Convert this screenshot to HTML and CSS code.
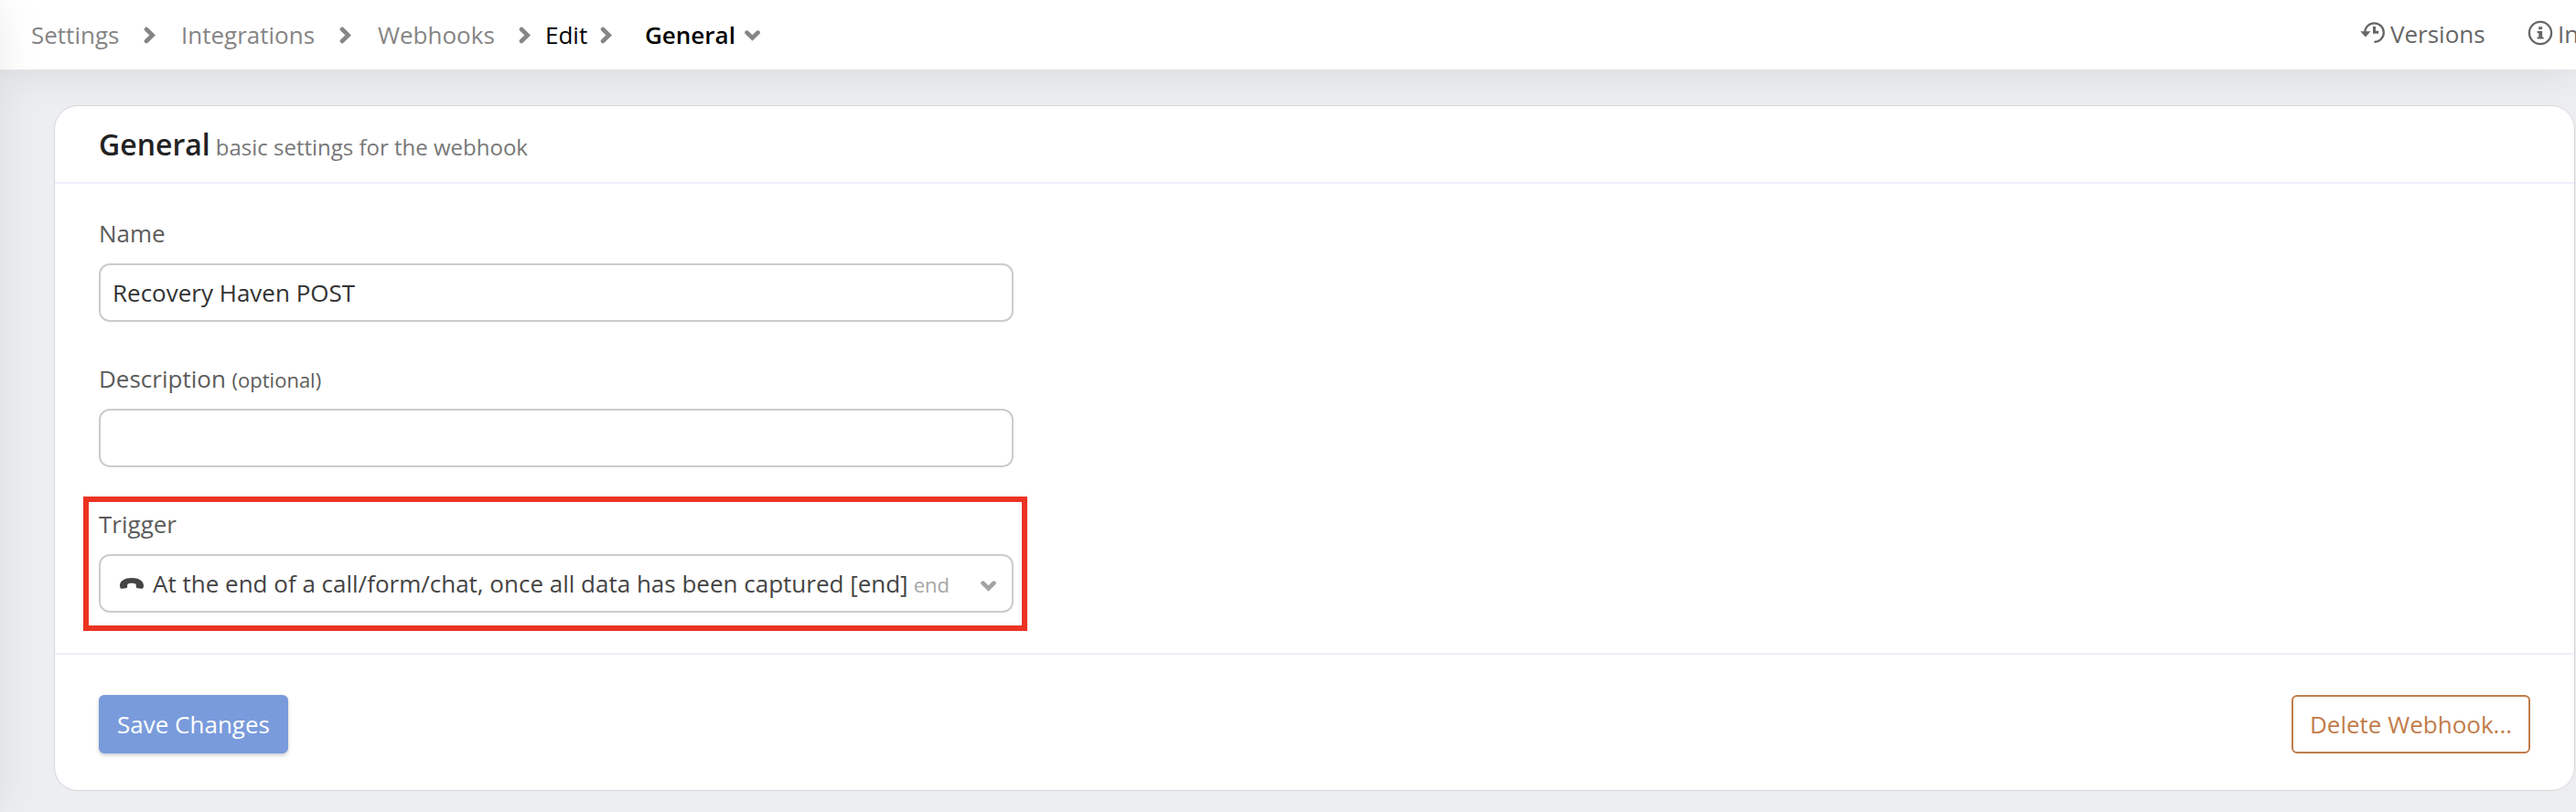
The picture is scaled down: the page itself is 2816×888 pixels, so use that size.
FILE: index.html
```
<!DOCTYPE html>
<html lang="en">
<head>
  <meta charset="utf-8">
  <title>Webhook Settings</title>
  <link rel="stylesheet" href="styles.css">
</head>
<body>
  <div class="sidebar-edge"></div>
  <header class="topbar">
    <nav class="breadcrumbs">
      <a class="crumb crumb-settings" href="#">Settings</a>
      <svg class="chevron" viewBox="0 0 13 19"><path d="M3 3l6.8 6.5L3 16"/></svg>
      <a class="crumb crumb-integrations" href="#">Integrations</a>
      <svg class="chevron" viewBox="0 0 13 19"><path d="M3 3l6.8 6.5L3 16"/></svg>
      <a class="crumb crumb-webhooks" href="#">Webhooks</a>
      <svg class="chevron" viewBox="0 0 13 19"><path d="M3 3l6.8 6.5L3 16"/></svg>
      <span class="crumb crumb-edit">Edit</span>
      <svg class="chevron" viewBox="0 0 13 19"><path d="M3 3l6.8 6.5L3 16"/></svg>
      <span class="crumb crumb-current">General</span>
      <svg class="chevron-down" viewBox="0 0 17 12"><path d="M2.5 2.7l6 5.8 6-5.8"/></svg>
    </nav>
    <div class="topbar-links">
      <a class="top-link" href="#">
        <svg class="icon-versions" viewBox="0 0 28 26">
          <path class="line" d="M5.2 11.5A10.3 10.3 0 1 1 15.4 21.9"/>
          <path class="fill" d="M0.3 10.2h11.2l-5.6 6.4z"/>
          <path class="fill" d="M14 5h3v4.8h3.2v3H14z"/>
        </svg>
        <span>Versions</span>
      </a>
      <a class="top-link" href="#">
        <svg class="icon-info" viewBox="0 0 28 28">
          <circle class="line" cx="14" cy="14" r="12.1"/>
          <path class="fill" d="M12.2 7.3h3.9v3h-3.9zM10.6 12.1h5.5v6.3h1.5v2.1h-7v-2.1h1.7v-4.2h-1.7z"/>
        </svg>
        <span>Info</span>
      </a>
    </div>
  </header>

  <main class="content">
    <form class="card">
      <div class="card-header">
        <h1>General</h1>
        <small>basic settings for the webhook</small>
      </div>
      <div class="card-body">
        <div class="form-group">
          <label for="name">Name</label>
          <input class="control" type="text" id="name" value="Recovery Haven POST">
        </div>
        <div class="form-group">
          <label for="description">Description <small>(optional)</small></label>
          <input class="control" type="text" id="description">
        </div>
        <div class="form-group highlighted">
          <label>Trigger</label>
          <div class="control select">
            <svg class="icon-hangup" viewBox="0 0 26 12"><path d="M13 0C20.500 0 26 3.200 26 8.200C26 11 25 12 23.500 11.800L19.500 11.300C18.200 11.100 17.800 10.400 17.800 9.200C17.800 8.200 17.900 7.300 17.100 6.500C15.600 5.500 10.400 5.500 8.900 6.500C8.100 7.300 8.200 8.200 8.200 9.200C8.200 10.400 7.800 11.100 6.500 11.300L2.500 11.800C1 12 0 11 0 8.200C0 3.200 5.500 0 13 0z"/></svg>
            <span class="select-text">At the end of a call/form/chat, once all data has been captured [end]</span>
            <span class="select-hint">end</span>
            <svg class="select-arrow" viewBox="0 0 17 12"><path d="M2.5 2.7l6 5.8 6-5.8"/></svg>
          </div>
        </div>
      </div>
      <div class="card-footer">
        <button class="btn btn-primary" type="button">Save Changes</button>
        <button class="btn btn-danger" type="button">Delete Webhook...</button>
      </div>
    </form>
  </main>
</body>
</html>
```
FILE: styles.css
```
* {
  box-sizing: border-box;
}
html, body {
  height: 100%;
  margin: 0;
  overflow: hidden;
}
body {
  background-color: #edeef2;
  color: #333;
  font-family: "Open Sans", sans-serif;
  font-size: 26px;
  line-height: 36px;
}
a {
  color: inherit;
  text-decoration: none;
}
svg {
  flex: none;
  display: block;
}
/* shadow cast by the off-canvas sidebar */
.sidebar-edge {
  position: fixed;
  z-index: 3;
  top: 0;
  bottom: 0;
  left: -100px;
  width: 100px;
  box-shadow: 0 0 50px rgba(0, 0, 0, 0.08);
}
.topbar {
  position: relative;
  z-index: 2;
  display: flex;
  justify-content: space-between;
  height: 76px;
  padding-left: 34px;
  background-color: #fff;
  box-shadow: 0 0 50px rgba(0, 0, 0, 0.1);
  white-space: nowrap;
}
.breadcrumbs {
  display: flex;
  align-items: center;
  color: #858585;
}
.crumb {
  flex: none;
}
.crumb-settings {
  width: 123px;
}
.crumb-integrations {
  width: 173px;
  margin-left: 28px;
}
.crumb-webhooks {
  width: 154px;
  margin-left: 29px;
}
.crumb-edit {
  width: 60px;
  margin-left: 16px;
  color: #000;
}
.crumb-current {
  width: 109px;
  margin-left: 36px;
  color: #000;
  font-weight: 600;
}
.chevron {
  width: 13px;
  height: 19px;
}
.chevron path,
.chevron-down path,
.select-arrow path {
  fill: none;
  stroke: #858585;
  stroke-width: 4.6;
  stroke-linecap: round;
}
.chevron-down {
  width: 17px;
  height: 12px;
  margin-top: 2px;
}
.topbar-links {
  display: flex;
  width: 236px;
  height: 74px;
  align-items: center;
  color: #666;
}
.top-link {
  display: flex;
  flex: none;
  align-items: center;
  width: 183px;
}
.icon-versions {
  width: 28px;
  height: 26px;
  margin-right: 5px;
}
.icon-info {
  width: 28px;
  height: 28px;
  margin: -2px 5px 0 0;
}
.line {
  fill: none;
  stroke: #666;
  stroke-width: 2.3;
}
.fill {
  fill: #666;
}
.content {
  padding: 39px 1px 0 59px;
}
.card {
  border: 1px solid #d5d6da;
  border-radius: 26px;
  background-color: #fff;
}
.card-header {
  display: flex;
  align-items: baseline;
  height: 85px;
  padding: 20px 48px 0;
  border-bottom: 2px solid #edf0fc;
}
h1 {
  margin: 0 6px 0 0;
  color: #222;
  font-size: 32px;
  font-weight: 600;
  line-height: 43px;
}
.card-header small {
  color: #777;
  font-size: 24px;
}
.card-body {
  padding: 36px 48px 0;
}
.form-group {
  position: relative;
  width: 1000px;
  padding-bottom: 44px;
}
label {
  display: block;
  height: 36px;
  margin-bottom: 15px;
  color: #5c5c5c;
}
label small {
  font-size: 22px;
}
.control {
  display: flex;
  align-items: center;
  width: 100%;
  height: 64px;
  padding: 0 13px;
  border: 2px solid #ccc;
  border-radius: 12px;
  background-color: #fff;
  color: #333;
  font: inherit;
}
.select {
  padding: 0 17px 0 21px;
  color: #444;
  white-space: nowrap;
}
.select-text {
  margin-left: 10px;
}
.select-hint {
  margin: 2px 0 0 6px;
  color: #a5a5a5;
  font-size: 22px;
}
.select-arrow {
  width: 17px;
  height: 12px;
  margin: 6px 0 0 auto;
}
.select-arrow path {
  stroke: #a3a3a3;
}
.icon-hangup {
  width: 26px;
  height: 12px;
  fill: #444;
}
/* red frame drawn around the trigger field */
.highlighted::after {
  content: "";
  box-sizing: border-box;
  position: absolute;
  top: -12px;
  left: -17px;
  width: 1032px;
  height: 147px;
  border: 6px solid #eb3323;
}
.card-footer {
  display: flex;
  justify-content: space-between;
  padding: 44px 48px 40px;
  border-top: 2px solid #edf0fc;
}
.btn {
  height: 64px;
  border: 2px solid;
  border-radius: 6px;
  padding: 0;
  font: inherit;
}
.btn-primary {
  width: 207px;
  border-color: #799bdc;
  background-color: #799bdc;
  color: #fff;
  box-shadow: 0 2px 4px rgba(0, 0, 0, 0.2);
}
.btn-danger {
  width: 261px;
  border-color: #c17c4a;
  background-color: #fff;
  color: #c17c4a;
}
```
